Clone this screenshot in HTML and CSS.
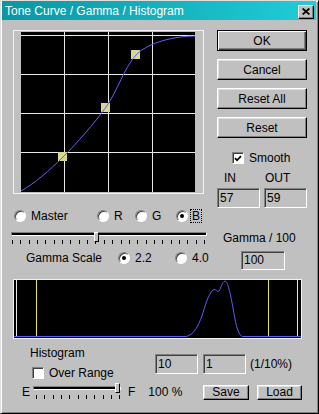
FILE: index.html
```html
<!DOCTYPE html>
<html lang="en">
<head>
    <meta charset="UTF-8">
    <meta name="viewport" content="width=device-width, initial-scale=1.0">
    <title>Tone Curve / Gamma / Histogram</title>
    <link rel="stylesheet" href="styles.css">
</head>
<body>
<div class="window">
    <div class="titlebar">
        <span class="title">Tone Curve / Gamma / Histogram</span>
        <div class="close-btn">
            <svg width="8" height="7" viewBox="0 0 8 7"><path d="M0.6 0.5 L7.4 6.5 M7.4 0.5 L0.6 6.5" stroke="#000" stroke-width="1.7" fill="none"/></svg>
        </div>
    </div>

    <div class="content">
        <div class="top">
            <div class="left-col">
                <div class="curve-frame">
                    <svg class="curve" width="174" height="160" viewBox="0 0 174 160">
                        <rect width="174" height="160" fill="#000"/>
                        <g stroke="#e6e6e6" stroke-width="1">
                            <line x1="0" y1="3.5" x2="174" y2="3.5"/>
                            <line x1="0" y1="42.5" x2="174" y2="42.5"/>
                            <line x1="0" y1="81.5" x2="174" y2="81.5"/>
                            <line x1="0" y1="120.5" x2="174" y2="120.5"/>
                            <line x1="43.5" y1="0" x2="43.5" y2="160"/>
                            <line x1="87.5" y1="0" x2="87.5" y2="160"/>
                            <line x1="131.5" y1="0" x2="131.5" y2="160"/>
                        </g>
                        <!-- control points -->
                        <rect x="37" y="120" width="9" height="9" fill="#d8d894"/>
                        <rect x="80" y="71" width="9" height="9" fill="#d8d894"/>
                        <rect x="110" y="18" width="9" height="9" fill="#d8d894"/>
                        <path d="M0,159 C14,151 28,139 42,125 C56,111 73,92 85,75 C97,58 103,36 115,23 C127,10 155,4 174,4" fill="none" stroke="#6262f4" stroke-width="1"/>
                    </svg>
                </div>

                <div class="channel-row">
                    <label class="radio-item"><span class="radio"></span>Master</label>
                    <label class="radio-item"><span class="radio"></span>R</label>
                    <label class="radio-item"><span class="radio"></span>G</label>
                    <label class="radio-item"><span class="radio checked"></span><span class="focus">B</span></label>
                </div>

                <div class="slider gamma-slider">
                    <div class="track"></div>
                    <div class="ticks"></div>
                    <div class="thumb"></div>
                </div>

                <div class="scale-row">
                    <span class="scale-label">Gamma Scale</span>
                    <label class="radio-item"><span class="radio checked"></span>2.2</label>
                    <label class="radio-item"><span class="radio"></span>4.0</label>
                </div>
            </div>

            <div class="right-col">
                <button class="btn default">OK</button>
                <button class="btn">Cancel</button>
                <button class="btn">Reset All</button>
                <button class="btn">Reset</button>

                <label class="check-row smooth">
                    <span class="checkbox checked">
                        <svg width="8" height="7" viewBox="0 0 8 7"><path d="M1 3.2 L3 5.3 L7 1.2" stroke="#000" stroke-width="1.8" fill="none"/></svg>
                    </span>
                    Smooth
                </label>

                <div class="io-labels">
                    <span class="in-label">IN</span>
                    <span class="out-label">OUT</span>
                </div>
                <div class="io-boxes">
                    <div class="field">57</div>
                    <div class="field">59</div>
                </div>

                <div class="gamma-label">Gamma / 100</div>
                <div class="field gamma-field">100</div>
            </div>
        </div>

        <div class="histogram-frame">
            <svg width="287" height="58" viewBox="0 0 287 58">
                <rect width="287" height="58" fill="#000"/>
                <line x1="2.5" y1="0" x2="2.5" y2="57" stroke="#e6e6e6"/>
                <line x1="283.5" y1="0" x2="283.5" y2="57" stroke="#e6e6e6"/>
                <line x1="22.5" y1="0" x2="22.5" y2="57" stroke="#e6e650"/>
                <line x1="254.5" y1="0" x2="254.5" y2="57" stroke="#e6e650"/>
                <path d="M0,56.5 L172,56.5 C180,55 184,46 188,36 C191,26 194,15 199,10 C202,8 203,13 205,11 C207,8 208,2 211,1 C214,2 216,12 219,28 C221,40 223,53 228,56.5 L287,56.5" fill="none" stroke="#5c5cf6" stroke-width="1"/>
            </svg>
        </div>

        <div class="hist-opts">
            <div class="hist-left">
                <div class="hist-label">Histogram</div>
                <label class="check-row over-row">
                    <span class="checkbox"></span>
                    Over Range
                </label>
            </div>
            <div class="hist-right">
                <div class="field">10</div>
                <div class="field">1</div>
                <span class="pct-note">(1/10%)</span>
            </div>
        </div>

        <div class="range-row">
            <span class="range-e">E</span>
            <div class="slider range-slider">
                <div class="track"></div>
                <div class="ticks"></div>
                <div class="thumb"></div>
            </div>
            <span class="range-f">F</span>
            <span class="range-value">100 %</span>
            <div class="file-btns">
                <button class="btn small">Save</button>
                <button class="btn small">Load</button>
            </div>
        </div>
    </div>
</div>
</body>
</html>
```

FILE: styles.css
```css
* {
    box-sizing: border-box;
}
body {
    margin: 0;
    background: #c0c0c0;
    font-family: "Liberation Sans", Arial, sans-serif;
    font-size: 12px;
    color: #000;
}
.window {
    width: 319px;
    height: 414px;
    background: #c0c0c0;
    border: 1px solid;
    border-color: #dfdfdf #000 #000 #dfdfdf;
    box-shadow: inset 1px 1px #fff, inset -1px -1px #808080;
    padding: 0 2px 2px 1px;
}
.titlebar {
    height: 19px;
    display: flex;
    align-items: center;
    justify-content: space-between;
    padding: 0 2px 0 3px;
    background: linear-gradient(to right, #0a96a2, #22ccd8);
    color: #fff;
}
.close-btn {
    width: 16px;
    height: 14px;
    margin-top: 2px;
    background: #c0c0c0;
    border: 1px solid;
    border-color: #fff #000 #000 #fff;
    box-shadow: inset -1px -1px #808080;
    display: flex;
    align-items: center;
    justify-content: center;
}
.close-btn svg {
    display: block;
}
.content {
    padding: 10px 0 0 11px;
}
.top {
    display: flex;
}
.left-col {
    width: 191px;
}
.curve-frame {
    width: 191px;
    height: 164px;
    border: 1px solid #f2f2f2;
    padding: 1px 8px 1px 7px;
}
.curve-frame svg,
.histogram-frame svg {
    display: block;
}

/* radio buttons */
.radio-item {
    display: flex;
    align-items: center;
    gap: 5px;
    height: 12px;
    line-height: 12px;
}
.radio {
    width: 12px;
    height: 12px;
    flex: none;
    border-radius: 50%;
    background: #fff;
    border: 1px solid;
    border-color: #808080 #fff #fff #808080;
    box-shadow: inset 1px 1px #404040;
    display: flex;
    align-items: center;
    justify-content: center;
}
.radio.checked::after {
    content: "";
    width: 4px;
    height: 4px;
    border-radius: 50%;
    background: #000;
}
.channel-row {
    display: grid;
    grid-template-columns: 83px 38px 41px auto;
    margin-top: 16px;
    margin-left: 1px;
}
.channel-row .radio-item:first-child {
    gap: 5px;
}
.focus {
    outline: 1px dotted #000;
    padding: 0 1px;
    margin-left: -2px;
}

/* sliders */
.slider {
    position: relative;
    height: 20px;
}
.track {
    height: 4px;
    margin-top: 2px;
    border: 1px solid;
    border-color: #808080 #fff #fff #808080;
    background: #000;
}
.ticks {
    height: 4px;
    margin-top: 4px;
    margin-left: 1px;
    background: repeating-linear-gradient(to right, #000 0 1px, transparent 1px 8.35px);
}
.thumb {
    position: absolute;
    top: 0;
    width: 5px;
    height: 10px;
    background: #c0c0c0;
    border: 1px solid;
    border-color: #fff #000 #000 #fff;
}
.gamma-slider {
    margin-top: 10px;
    margin-left: -2px;
    width: 196px;
}
.gamma-slider .ticks {
    width: 194px;
}
.gamma-slider .thumb {
    left: 83px;
}
.scale-row {
    display: grid;
    grid-template-columns: 92px 57px auto;
    padding-left: 13px;
    height: 12px;
    line-height: 12px;
}

/* right column */
.right-col {
    margin-left: 13px;
    width: 90px;
}
.btn {
    display: block;
    width: 90px;
    height: 21px;
    padding: 0;
    font-family: inherit;
    font-size: 12px;
    color: #000;
    background: #c0c0c0;
    border: 1px solid;
    border-color: #fff #000 #000 #fff;
    box-shadow: inset -1px -1px #808080, inset 1px 1px #dfdfdf;
}
.btn + .btn {
    margin-top: 8px;
}
.btn.default {
    border-color: #000;
    box-shadow: inset 1px 1px #fff, inset -1px -1px #404040, inset -2px -2px #808080;
}
.check-row {
    display: flex;
    align-items: center;
    gap: 5px;
    height: 12px;
    line-height: 12px;
}
.checkbox {
    width: 12px;
    height: 12px;
    flex: none;
    background: #fff;
    border: 1px solid;
    border-color: #808080 #fff #fff #808080;
    box-shadow: inset 1px 1px #404040;
    display: flex;
    align-items: center;
    justify-content: center;
}
.smooth {
    margin-top: 14px;
    padding-left: 15px;
}
.io-labels {
    display: grid;
    grid-template-columns: 47px 43px;
    margin-top: 8px;
    height: 12px;
    line-height: 12px;
}
.in-label {
    padding-left: 7px;
}
.out-label {
    padding-left: 1px;
}
.io-boxes {
    display: flex;
    gap: 4px;
    margin-top: 4px;
}
.field {
    width: 43px;
    height: 20px;
    padding: 1px 0 0 2px;
    line-height: 16px;
    border: 1px solid;
    border-color: #808080 #fff #fff #808080;
    box-shadow: inset 1px 1px #404040;
    background: #c0c0c0;
}
.gamma-label {
    margin-top: 24px;
    padding-left: 6px;
    line-height: 13px;
}
.gamma-field {
    margin-top: 6px;
    margin-left: 24px;
    width: 44px;
    height: 19px;
    line-height: 15px;
}

/* histogram */
.histogram-frame {
    width: 289px;
    height: 60px;
    margin-top: 9px;
    border: 1px solid #f2f2f2;
}
.hist-opts {
    display: flex;
    margin-top: 8px;
}
.hist-left {
    width: 142px;
    padding-left: 17px;
}
.hist-label {
    line-height: 13px;
}
.over-row {
    margin-top: 7px;
    padding-left: 2px;
}
.hist-right {
    display: flex;
    align-items: center;
    gap: 5px;
    margin-top: 7px;
    height: 20px;
}
.hist-right .field + .field {
    margin-left: 0;
}
.pct-note {
    margin-left: -1px;
}
.range-row {
    display: flex;
    align-items: center;
    margin-top: 4px;
    height: 18px;
    padding-left: 9px;
}
.range-slider {
    width: 88px;
    height: 18px;
    margin-left: 3px;
}
.range-slider .track {
    margin-top: 3px;
}
.range-slider .ticks {
    margin-top: 5px;
    margin-left: 3px;
    width: 84px;
}
.range-slider .thumb {
    left: 82px;
}
.range-f {
    margin-left: 7px;
}
.range-value {
    margin-left: 13px;
}
.file-btns {
    display: flex;
    gap: 8px;
    margin-left: auto;
    margin-right: 14px;
}
.btn.small {
    width: 46px;
    height: 15px;
    line-height: 12px;
}
.btn.small + .btn.small {
    margin-top: 0;
    width: 45px;
}
```
